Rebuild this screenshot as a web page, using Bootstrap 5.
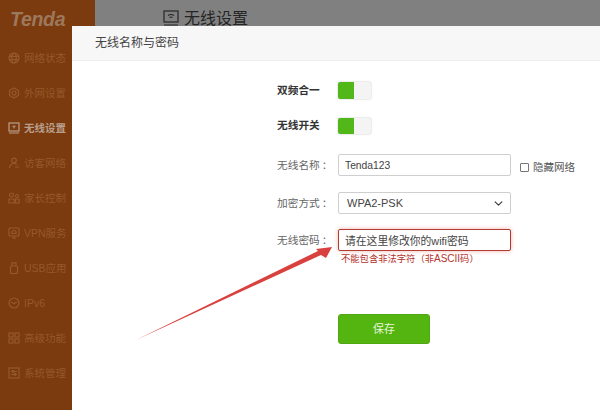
<!DOCTYPE html>
<html lang="zh-CN">
<head>
<meta charset="utf-8">
<title>无线设置</title>
<link rel="stylesheet" href="https://cdn.jsdelivr.net/npm/bootstrap@5.3.0/dist/css/bootstrap.min.css">
<style>
html,body{margin:0;height:410px;overflow:hidden}
body{background:#fff;font-family:"Liberation Sans","Noto Sans CJK SC",sans-serif;color:#444}
.shell{height:410px;width:600px;position:relative}
.side{width:95px;background:#7c3a0f;flex:none;padding-left:8px}
.logo{font:italic bold 19.5px "Liberation Sans",sans-serif;color:#9c785c;height:36px;padding:8px 0 0 2px;letter-spacing:-.3px;margin-bottom:4.5px;line-height:22px}
.nav-row{height:35px;gap:4px;color:#95592a;font-size:10.5px;white-space:nowrap;margin:0;line-height:35px}
.nav-row svg{width:12px;height:12px;flex:none;fill:none;stroke:currentColor;stroke-width:1.2}
.nav-row.on{color:#b89f8c;font-weight:700}
.topbar{background:#808080;height:26px;padding:10px 0 0 68px;gap:5px;font-size:16px;line-height:18px;color:#252525;flex:1;overflow:hidden}
.topbar svg{width:16px;height:16px;flex:none;fill:none;stroke:#252525;stroke-width:1.2}
.dialog{position:absolute;left:72px;top:26px;right:0;bottom:0;background:#fff}
.dlg-head{height:35px;background:#f7f7f7;border-bottom:1px solid #efefef;padding-left:23px;font-size:12px;line-height:35px;color:#444}
.dlg-body{padding:21px 0 0 205px}
.f-row{gap:10px;font-size:10.7px;line-height:1}
.f-lab{width:51px;flex:none;white-space:nowrap;color:#666}
.f-lab.strong{font-weight:700;color:#333}
.f-colon{margin-left:2px}
.sw{width:33px;height:16.5px;border-radius:2px;background:#f4f4f4;box-shadow:0 0 2px #bbb;overflow:hidden}
.sw i{display:block;width:16px;height:17px;background:#52b81a}
.f-in.form-control,.f-in.form-select{width:173px;height:22px;min-height:0;border-radius:2px;font-size:10.3px;color:#444;padding:0 6px;border-color:#cfcfcf;box-shadow:none;line-height:20px;flex:none}
.f-in.form-select{height:22px;font-size:11px;padding-left:8px;background-position:right 6px center;background-size:11px 9px}
.f-in.bad{border-color:#b23b33;box-shadow:0 0 4px #f2b3a8;padding-left:6px;font-size:10.8px}
.hide-net{gap:4px;font-size:10.5px;color:#555;margin-left:-1px;white-space:nowrap;padding-top:5px}
.hide-net .form-check-input{width:9px;height:9px;margin:0;border-radius:1px;border-color:#777}
.err{font-size:9.3px;color:#b5312b;padding:1px 0 0 64px;line-height:13px;white-space:nowrap}
.err-latin{font-size:10px}
.save.btn{width:92px;height:30px;margin:48px 0 0 61px;background:#55b510;border:1px solid #4fa80f;color:#e8f5dc;font-size:11px;border-radius:3px;padding:0;display:block}
.arrow{position:absolute;left:0;top:0;width:600px;height:410px;pointer-events:none}
.sw-next{margin-top:19px}
.in1{margin-top:20px}
.in2{margin-top:16px}
.in3{margin-top:15px}
</style>
</head>
<body>
<div class="shell d-flex">
  <nav class="side">
    <div class="logo">Tenda</div>
    <div class="nav-row d-flex align-items-center"><svg viewBox="0 0 12 12"><circle cx="6" cy="6" r="5"/><ellipse cx="6" cy="6" rx="2.2" ry="5"/><path d="M1 4.4h10M1 7.6h10"/></svg>网络状态</div>
    <div class="nav-row d-flex align-items-center"><svg viewBox="0 0 12 12"><path d="M6 1l4.500 2.500v5L6 11 1.500 8.500v-5z"/><circle cx="6" cy="6" r="2"/></svg>外网设置</div>
    <div class="nav-row on d-flex align-items-center"><svg viewBox="0 0 12 12"><rect x="1" y="1" width="10" height="8"/><path d="M1 11h10M4.500 4.500q1.500-1 3 0M5.300 6q.7-.5 1.400 0"/></svg>无线设置</div>
    <div class="nav-row d-flex align-items-center"><svg viewBox="0 0 12 12"><circle cx="6" cy="3.500" r="2.300"/><path d="M1.500 11q.5-4.500 4.500-4.500 1.500 0 3 1M7 10h4"/></svg>访客网络</div>
    <div class="nav-row d-flex align-items-center"><svg viewBox="0 0 12 12"><circle cx="3.500" cy="3" r="2"/><circle cx="9" cy="4" r="1.500"/><path d="M1 11V7h5v4zM7.500 11V7H11v4z"/></svg>家长控制</div>
    <div class="nav-row d-flex align-items-center"><svg viewBox="0 0 12 12"><rect x="1" y="1" width="10" height="8" rx="1"/><path d="M6 9v2M4 11h4M4 5.500a2 2 0 014 0v1H4z"/></svg>VPN服务</div>
    <div class="nav-row d-flex align-items-center"><svg viewBox="0 0 12 12"><rect x="2.500" y="4" width="7" height="7.500" rx="1"/><path d="M4 4V.800h4V4"/></svg>USB应用</div>
    <div class="nav-row d-flex align-items-center"><svg viewBox="0 0 12 12"><circle cx="6" cy="6" r="5"/><path d="M3 6q1-1.500 2 0t2 0 2 0"/></svg>IPv6</div>
    <div class="nav-row d-flex align-items-center"><svg viewBox="0 0 12 12"><rect x="1" y="1" width="4" height="4"/><rect x="7" y="1" width="4" height="4"/><rect x="1" y="7" width="4" height="4"/><rect x="7" y="7" width="4" height="4"/></svg>高级功能</div>
    <div class="nav-row d-flex align-items-center"><svg viewBox="0 0 12 12"><rect x="1" y="1" width="10" height="10"/><path d="M3 4.500h6M3 7.500h6"/><circle cx="5" cy="4.500" r=".8"/><circle cx="7" cy="7.500" r=".8"/></svg>系统管理</div>
  </nav>
  <header class="topbar d-flex"><svg viewBox="0 0 16 16"><rect x="1" y="1" width="14" height="11"/><path d="M1 15h14M5 5.500q3-2 6 0M6.500 7.500q1.500-1 3 0"/></svg>无线设置</header>

  <section class="dialog">
    <div class="dlg-head">无线名称与密码</div>
    <div class="dlg-body">
      <div class="f-row d-flex align-items-center mb-0"><span class="f-lab strong">双频合一</span><span class="sw"><i></i></span></div>
      <div class="f-row d-flex align-items-center sw-next"><span class="f-lab strong">无线开关</span><span class="sw"><i></i></span></div>
      <div class="f-row d-flex align-items-center in1"><span class="f-lab">无线名称<span class="f-colon">：</span></span><input class="form-control f-in" value="Tenda123"><label class="hide-net d-flex align-items-center"><input class="form-check-input" type="checkbox">隐藏网络</label></div>
      <div class="f-row d-flex align-items-center in2"><span class="f-lab">加密方式<span class="f-colon">：</span></span><select class="form-select f-in"><option>WPA2-PSK</option></select></div>
      <div class="f-row d-flex align-items-center in3"><span class="f-lab">无线密码<span class="f-colon">：</span></span><input class="form-control f-in bad" value="请在这里修改你的wifi密码"></div>
      <div class="err">不能包含非法字符（非<span class="err-latin">ASCII</span>码）</div>
      <button class="btn save" type="button">保存</button>
    </div>
  </section>

  <svg class="arrow" viewBox="0 0 600 410"><polygon points="136,340 318,251 316,249 332,247 326,258 321,255" fill="#d9413f"/></svg>
</div>
<script src="https://cdn.jsdelivr.net/npm/bootstrap@5.3.0/dist/js/bootstrap.bundle.min.js"></script>
</body>
</html>
